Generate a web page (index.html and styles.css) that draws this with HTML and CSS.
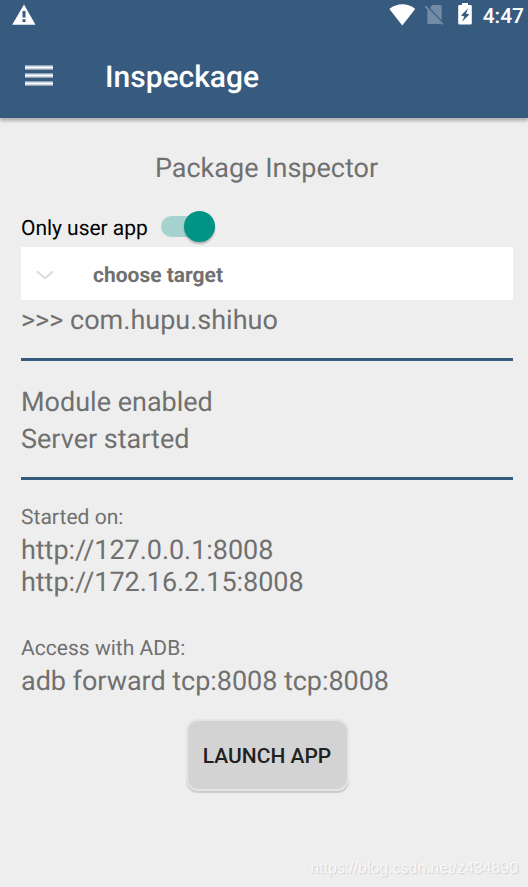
FILE: index.html
```html
<!DOCTYPE html>
<html lang="en">
<head>
    <meta charset="UTF-8">
    <meta name="viewport" content="width=device-width, initial-scale=1.0">
    <title>Inspeckage</title>
    <link rel="stylesheet" href="styles.css">
</head>
<body>
    <header>
        <div class="status-bar">
            <svg class="warning" width="24" height="22" viewBox="0 0 24 22">
                <path d="M12 0.4 L23.5 20.8 H0.2 Z" fill="#fff"/>
                <path d="M10.5 7h3v6.6h-3zM10.5 15.3h3v2.8h-3z" fill="#375a7f"/>
            </svg>
            <div class="status-icons">
                <svg width="27" height="22" viewBox="0 0 27 22">
                    <path d="M0.4 4.9 C8 -1.2 19 -1.2 26.2 4.9 L13.3 21.4 Z" fill="#fff"/>
                </svg>
                <svg class="sim" width="21" height="22" viewBox="0 0 21 22">
                    <path d="M8.3 1H16.5q1.2 0 1.2 1.2V16.4L5.9 4zM3.3 5.2L17.4 19.6Q17 20 16.5 20H4.5q-1.2 0-1.2-1.2z" fill="#738ba5"/>
                    <path d="M1.2 2.2 L18.8 20.4" stroke="#738ba5" stroke-width="1.8"/>
                </svg>
                <svg class="battery" width="14" height="22" viewBox="0 0 14 22">
                    <path d="M4 0h6v2h2.6q1.2 0 1.2 1.2v17q0 1.4-1.4 1.4H1.6q-1.4 0-1.4-1.4v-17Q0.2 2 1.4 2H4z" fill="#fff"/>
                    <path d="M10.2 5.2 L3 12.4 L6.4 13.4 L4 18.8 L11.4 11.4 L8 10.4 Z" fill="#375a7f"/>
                </svg>
                <span class="clock">4:47</span>
            </div>
        </div>
        <div class="toolbar">
            <button type="button" class="menu" aria-label="Menu">
                <span></span>
                <span></span>
                <span></span>
            </button>
            <h1>Inspeckage</h1>
        </div>
    </header>

    <main>
        <h2>Package Inspector</h2>

        <label class="user-app">
            Only user app
            <span class="switch"><span class="thumb"></span></span>
        </label>

        <div class="spinner">
            <svg width="18" height="11" viewBox="0 0 18 11">
                <path d="M0.8 1.2 L9 8.2 L17.2 1.2" fill="none" stroke="#dcdcdc" stroke-width="2"/>
            </svg>
            <span>choose target</span>
        </div>
        <p class="target">&gt;&gt;&gt; com.hupu.shihuo</p>

        <hr>

        <div class="state">
            <p>Module enabled</p>
            <p>Server started</p>
        </div>

        <hr>

        <div class="info">
            <p class="caption">Started on:</p>
            <p>http://127.0.0.1:8008</p>
            <p>http://172.16.2.15:8008</p>
        </div>

        <div class="info adb">
            <p class="caption">Access with ADB:</p>
            <p>adb forward tcp:8008 tcp:8008</p>
        </div>

        <button type="button" class="launch">LAUNCH APP</button>
    </main>

    <footer>https://blog.csdn.net/z434890</footer>
</body>
</html>
```
FILE: styles.css
```css
* {
    box-sizing: border-box;
}

body {
    display: flex;
    flex-direction: column;
    height: 887px;
    margin: 0;
    overflow: hidden;
    background-color: #eee;
    color: #707070;
    font-family: Roboto, sans-serif;
    font-size: 27px;
    line-height: 32px;
    text-rendering: geometricPrecision;
}

h1,
h2,
p {
    margin: 0;
    font-weight: normal;
}

svg {
    display: block;
}

header {
    height: 118px;
    background-color: #375a7f;
    color: #fff;
    box-shadow: 0 3px 3px rgba(0, 0, 0, 0.25);
}

.status-bar {
    display: flex;
    justify-content: space-between;
    height: 36px;
    padding: 4px 4px 0 12px;
}

.status-icons {
    display: flex;
}

.sim {
    margin-left: 8px;
}

.battery {
    margin: -1px 0 0 13px;
}

.clock {
    margin-left: 11px;
    font-size: 21px;
    font-weight: 500;
    line-height: 26px;
}

.toolbar {
    display: flex;
    align-items: center;
    height: 82px;
    padding-left: 25px;
}

.menu {
    display: flex;
    flex-direction: column;
    gap: 3px;
    width: 28px;
    margin: 0 52px 3px 0;
    padding: 0;
    border: none;
    background: none;
}

.menu span {
    height: 5px;
    background: linear-gradient(#7089a3, #fff 45%, #fff 55%, #7089a3);
}

h1 {
    padding-top: 2px;
    font-size: 30px;
    font-weight: 500;
    line-height: 36px;
}

main {
    display: flex;
    flex-direction: column;
    padding: 34px 15px 0 21px;
}

h2 {
    margin-right: 1px;
    font-size: 27px;
    line-height: 32px;
    text-align: center;
}

.user-app {
    display: flex;
    height: 63px;
    padding-top: 32px;
    color: #000;
    font-size: 21px;
    line-height: 26px;
    letter-spacing: -0.04px;
}

.switch {
    display: flex;
    align-items: center;
    justify-content: flex-end;
    width: 54px;
    height: 21px;
    margin-left: 13px;
    border-radius: 11px;
    background-color: #a6d3cf;
}

.thumb {
    width: 31px;
    height: 31px;
    flex: none;
    border-radius: 50%;
    background-color: #009485;
    box-shadow: 0 2px 2px rgba(0, 0, 0, 0.25);
}

.spinner {
    display: flex;
    align-items: center;
    height: 53px;
    padding: 3px 0 0 15px;
    background-color: #fff;
    font-size: 21px;
    font-weight: bold;
    line-height: 24px;
}

.spinner span {
    margin-left: 39px;
    padding-top: 2px;
}

.target {
    padding: 4px 0 22px;
}

hr {
    width: 100%;
    height: 3px;
    margin: 0;
    border: none;
    background-color: #375a7f;
}

.state {
    display: flex;
    flex-direction: column;
    gap: 5px;
    padding: 25px 0 22px;
}

.info {
    padding-top: 26px;
    letter-spacing: -0.04px;
}

.adb {
    padding-top: 39px;
}

.caption {
    margin-bottom: 4px;
    font-size: 21px;
    line-height: 24px;
    letter-spacing: 0.03px;
}

.launch {
    align-self: center;
    width: 163px;
    height: 72px;
    margin: 22px 1px 0 1px;
    padding: 2px 0 0;
    border: 2px solid #e4e4e4;
    border-radius: 12px;
    background-color: #d3d3d3;
    box-shadow: 0 2px 1px rgba(0, 0, 0, 0.15);
    color: #212121;
    font-family: inherit;
    font-size: 21px;
    font-weight: 500;
}

footer {
    margin-top: auto;
    padding: 0 10px 8px 0;
    color: #f8f8f8;
    font-family: "Liberation Sans", Arial, sans-serif;
    font-size: 16px;
    line-height: 20px;
    letter-spacing: -0.05px;
    text-align: right;
    text-shadow: 1px 1px 1px #d0d0d0;
}
```
